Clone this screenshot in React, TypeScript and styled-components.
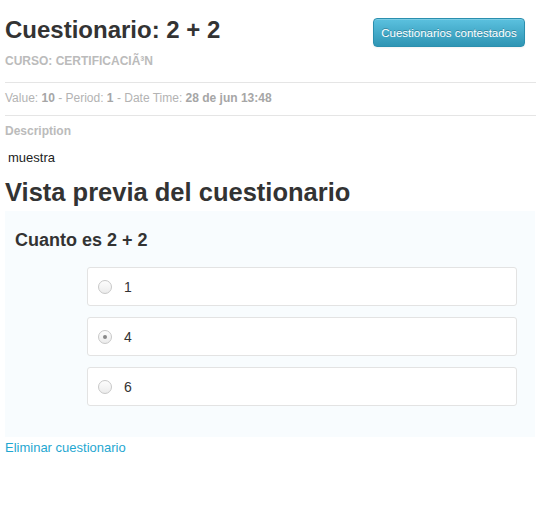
import React from 'react';
import styled, { createGlobalStyle } from 'styled-components';

const Global = createGlobalStyle`
  html, body { margin: 0; padding: 0; background: #fff; }
  body {
    font-family: "Liberation Sans", Arial, Helvetica, sans-serif;
    font-size: 14px;
    line-height: 20px;
    color: #333;
  }
`;

const Page = styled.div`
  padding: 0 5px;
`;

const Header = styled.div`
  display: flex;
  justify-content: space-between;
  align-items: flex-start;
`;

const TitleBlock = styled.div`
  padding-top: 15px;
`;

const Title = styled.h1`
  margin: 0;
  font-size: 24px;
  line-height: 30px;
  font-weight: bold;
  color: #333;
`;

const Course = styled.div`
  margin-top: 7px;
  font-size: 12px;
  line-height: 18px;
  font-weight: bold;
  color: #bbb;
`;

const InfoButton = styled.button`
  margin: 18px 11px 0 0;
  width: 152px;
  height: 29px;
  padding: 0;
  border: 1px solid #2b8fae;
  border-radius: 4px;
  background: linear-gradient(#5bc1df, #2f95b4);
  box-shadow: inset 0 1px 0 rgba(255, 255, 255, 0.2), 0 1px 2px rgba(0, 0, 0, 0.05);
  color: #fff;
  font-family: "Liberation Sans", Arial, sans-serif;
  font-size: 11.5px;
  text-shadow: 0 -1px 0 rgba(0, 0, 0, 0.25);
  cursor: pointer;
`;

const Divider = styled.hr<{ $top: number; $bottom: number }>`
  margin: ${(p) => `${p.$top}px 0 ${p.$bottom}px`};
  border: 0;
  border-top: 1px solid #e5e5e5;
`;

const Meta = styled.div`
  font-size: 12px;
  line-height: 18px;
  color: #b3b3b3;
`;

const Strong = styled.b`
  color: #a6a6a6;
`;

const Label = styled.div`
  font-size: 12px;
  line-height: 18px;
  font-weight: bold;
  color: #bbb;
`;

const DescText = styled.p`
  margin: 9px 0 0 3px;
  font-size: 13px;
  line-height: 18px;
  color: #222;
`;

const SectionTitle = styled.h2`
  margin: 9px 0 0;
  font-size: 25.5px;
  line-height: 32px;
  font-weight: bold;
  color: #333;
`;

const Panel = styled.div`
  margin-top: 3px;
  margin-right: 1px;
  background: #f8fcfe;
  padding: 17px 18px 31px 10px;
`;

const Question = styled.h3`
  margin: 0 0 15px;
  font-size: 18px;
  line-height: 24px;
  font-weight: bold;
  color: #333;
`;

const Options = styled.div`
  display: flex;
  flex-direction: column;
  gap: 11px;
  margin-left: 72px;
`;

const Option = styled.label`
  display: flex;
  align-items: center;
  height: 39px;
  box-sizing: border-box;
  padding-left: 10px;
  background: #fff;
  border: 1px solid #e3e3e3;
  border-radius: 3px;
  font-size: 14px;
  color: #333;
`;

const Radio = styled.span<{ $checked?: boolean }>`
  position: relative;
  width: 14px;
  height: 14px;
  box-sizing: border-box;
  border-radius: 50%;
  border: 1px solid #c8c8c8;
  background: linear-gradient(#fdfdfd, #ececec);
  margin-right: 12px;
  &::after {
    content: "";
    display: ${(p) => (p.$checked ? 'block' : 'none')};
    position: absolute;
    left: 4px;
    top: 4px;
    width: 4px;
    height: 4px;
    border-radius: 50%;
    background: #888;
  }
`;

const Link = styled.a`
  display: inline-block;
  font-size: 13px;
  line-height: 18px;
  color: #1fa7d1;
  text-decoration: none;
`;

const options = [
  { label: '1', checked: false },
  { label: '4', checked: true },
  { label: '6', checked: false },
];

export default function App() {
  return (
    <Page>
      <Global />
      <Header>
        <TitleBlock>
          <Title>Cuestionario: 2 + 2</Title>
          <Course>CURSO: CERTIFICACIÃ³N</Course>
        </TitleBlock>
        <InfoButton>Cuestionarios contestados</InfoButton>
      </Header>
      <Divider $top={12} $bottom={6} />
      <Meta>
        Value: <Strong>10</Strong> - Period: <Strong>1</Strong> - Date Time:{' '}
        <Strong>28 de jun 13:48</Strong>
      </Meta>
      <Divider $top={8} $bottom={6} />
      <Label>Description</Label>
      <DescText>muestra</DescText>
      <SectionTitle>Vista previa del cuestionario</SectionTitle>
      <Panel>
        <Question>Cuanto es 2 + 2</Question>
        <Options>
          {options.map((o) => (
            <Option key={o.label}>
              <Radio $checked={o.checked} />
              {o.label}
            </Option>
          ))}
        </Options>
      </Panel>
      <Link href="#">Eliminar cuestionario</Link>
    </Page>
  );
}
